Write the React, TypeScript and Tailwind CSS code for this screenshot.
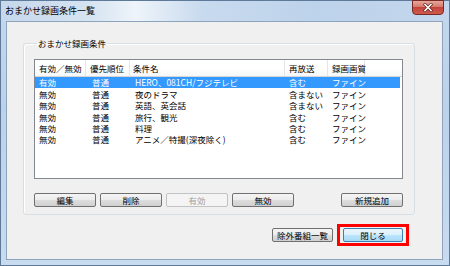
import React from 'react';
import clsx from 'clsx';

type Row = {
    status: string;
    priority: string;
    name: string;
    rerun: string;
    quality: string;
};

const rows: Row[] = [
    { status: '有効', priority: '普通', name: 'HERO、081CH/フジテレビ', rerun: '含む', quality: 'ファイン' },
    { status: '無効', priority: '普通', name: '夜のドラマ', rerun: '含まない', quality: 'ファイン' },
    { status: '無効', priority: '普通', name: '英語、英会話', rerun: '含まない', quality: 'ファイン' },
    { status: '無効', priority: '普通', name: '旅行、観光', rerun: '含む', quality: 'ファイン' },
    { status: '無効', priority: '普通', name: '料理', rerun: '含む', quality: 'ファイン' },
    { status: '無効', priority: '普通', name: 'アニメ／特撮(深夜除く)', rerun: '含む', quality: 'ファイン' },
];

const font = { fontFamily: '"Noto Sans CJK JP", "Noto Sans", sans-serif' };

const WinButton: React.FC<{ label: string; disabled?: boolean; primary?: boolean; width: string }> = ({ label, disabled, primary, width }) => (
    <button
        disabled={disabled}
        className={clsx(
            'h-[14px] flex items-center justify-center rounded-[2px] border text-[8.5px] leading-none whitespace-nowrap',
            width,
            disabled && 'border-[#bfc3c6] bg-[#f4f4f4] text-[#a0a0a0]',
            !disabled && !primary && 'border-[#707070] text-black bg-[linear-gradient(#f4f4f4_0%,#ececec_50%,#dedede_50%,#d0d0d0_100%)]',
            primary && 'border-[#3c7fb1] text-black bg-[linear-gradient(#eaf6fd_0%,#d9f0fc_50%,#bee6fd_50%,#a7d9f5_100%)]'
        )}
    >
        {label}
    </button>
);

const App: React.FC = () => {
    const cols = ['w-[51px] pl-[4px]', 'w-[44px] pl-[4px]', 'w-[155px] pl-[3px]', 'w-[43px] pl-[4px]', 'w-[37px] pl-[4px]'];
    const headers = ['有効／無効', '優先順位', '条件名', '再放送', '録画画質'];

    return (
        <div style={font} className="w-[450px] h-[266px] flex flex-col border border-[#5f7a98] bg-[linear-gradient(180deg,#c4d7ec_0%,#bcd2ea_40%,#c9dbee_100%)] text-black">
            {/* title bar */}
            <div className="h-[20px] flex items-start bg-[linear-gradient(90deg,#c6d8ec_0%,#d6e3f1_20%,#eef4fa_30%,#c8daee_45%,#bdd3eb_70%,#c3d6ec_100%)]">
                <span className="pl-[4px] pt-[4px] text-[9px] leading-[12px]">おまかせ録画条件一覧</span>
                <div className="ml-auto mr-[5px] w-[32px] h-[15px] -mt-px flex items-center justify-center rounded-b-[4px] border border-[#7a2a24] bg-[linear-gradient(#e7a79d_0%,#d7796c_45%,#c5443a_50%,#cd5a4d_100%)]">
                    <svg width="10" height="9" viewBox="0 0 10 9">
                        <path d="M2 1.5 L8 7.5 M8 1.5 L2 7.5" stroke="#5b1a16" strokeWidth="3" strokeLinecap="square" />
                        <path d="M2 1.5 L8 7.5 M8 1.5 L2 7.5" stroke="#ffffff" strokeWidth="1.6" strokeLinecap="square" />
                    </svg>
                </div>
            </div>

            {/* client area */}
            <div className="ml-[5px] w-[437px] h-[239px] border border-[#8ea4bd] bg-[#f0f0f0] pt-[15px] pl-[16px] pr-[27px] flex flex-col">
                <fieldset className="h-[178px] border border-[#d5dfe5] rounded-[3px] shadow-[inset_1px_1px_0_#ffffff] pl-[10px] pr-[11px] pb-[7px]">
                    <legend className="ml-[3px] px-[1px] text-[8.5px] leading-[12px]">おまかせ録画条件</legend>

                    <div className="mt-[10px] h-[120px] border border-[#828790] bg-white">
                        <div className="h-[17px] flex border-b border-[#d5d5d5] bg-[linear-gradient(#ffffff_0%,#ffffff_50%,#f6f7f8_100%)]">
                            {headers.map((h, i) => (
                                <div key={h} className={clsx('shrink-0 flex items-center border-r border-[#e3e5e8] text-[8.5px] leading-none whitespace-nowrap', cols[i])}>
                                    {h}
                                </div>
                            ))}
                        </div>
                        {rows.map((r, i) => (
                            <div
                                key={i}
                                className={clsx(
                                    'h-[11.4px] mr-[2px] flex text-[8.5px] leading-none items-center whitespace-nowrap',
                                    i === 0 && 'bg-[#3399ff] text-white'
                                )}
                            >
                                <div className={clsx('shrink-0', cols[0])}>{r.status}</div>
                                <div className={clsx('shrink-0', cols[1], 'pl-[6px]')}>{r.priority}</div>
                                <div className={clsx('shrink-0', cols[2], 'pl-[5px]')}>{r.name}</div>
                                <div className={clsx('shrink-0', cols[3])}>{r.rerun}</div>
                                <div className={clsx('shrink-0', cols[4])}>{r.quality}</div>
                            </div>
                        ))}
                    </div>

                    <div className="mt-[14px] flex gap-[4px]">
                        <WinButton label="編集" width="w-[62px]" />
                        <WinButton label="削除" width="w-[62px]" />
                        <WinButton label="有効" width="w-[62px]" disabled />
                        <WinButton label="無効" width="w-[62px]" />
                        <div className="flex-1" />
                        <WinButton label="新規追加" width="w-[62px]" />
                    </div>
                </fieldset>

                <div className="mt-[9px] mr-[6px] flex items-center justify-end gap-[4px]">
                    <WinButton label="除外番組一覧" width="w-[61px]" />
                    <div className="border-[3px] border-[#ff0000] px-[3px] py-[1px]">
                        <WinButton label="閉じる" width="w-[60px]" primary />
                    </div>
                </div>
            </div>
        </div>
    );
};

export default App;
